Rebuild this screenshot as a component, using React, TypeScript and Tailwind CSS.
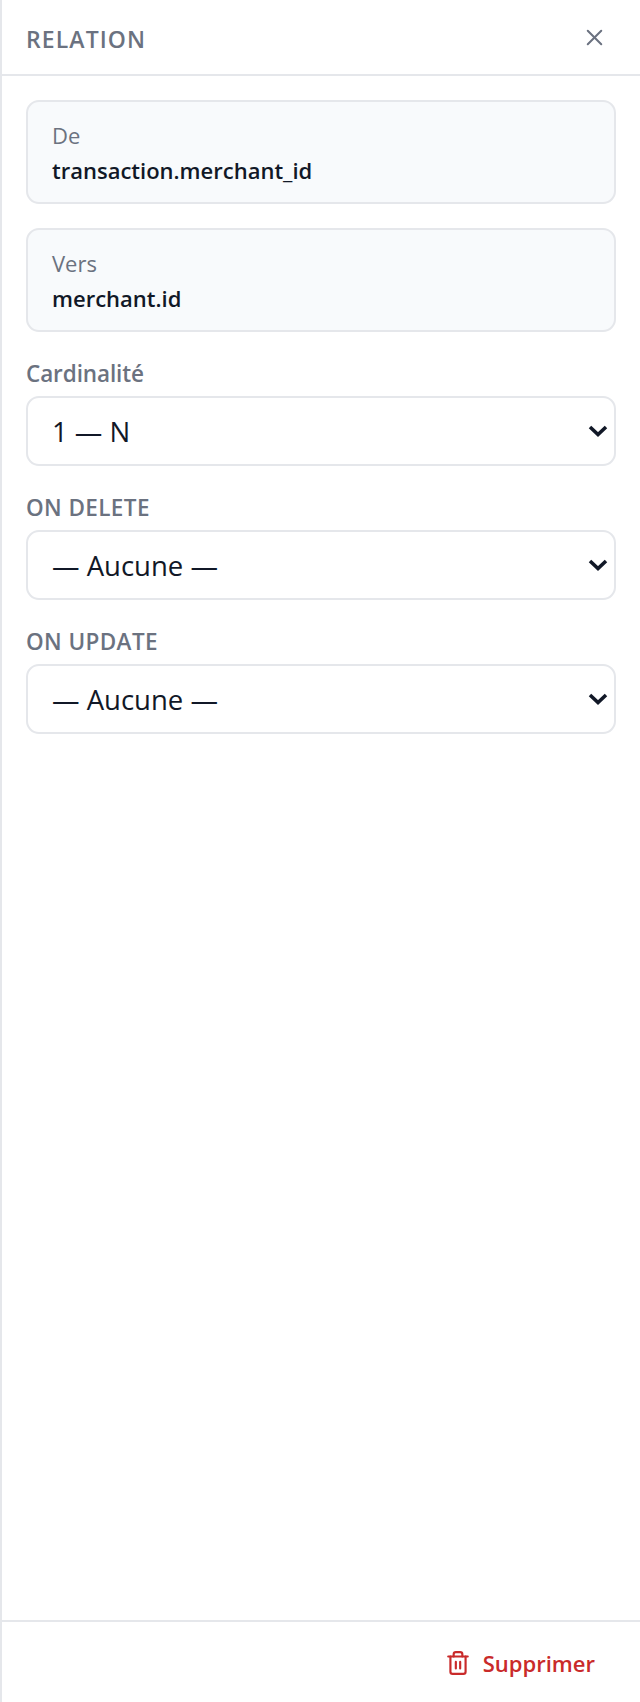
import React from "react";
import { Trash2, X } from "lucide-react";

function InfoCard(props: { label: string; value: string }): JSX.Element {
  return (
    <div className="h-[104px] rounded-[13px] border-2 border-[#e5e7eb] bg-[#f8fafc] px-6 pt-[17px]">
      <div className="text-[22px] leading-[33px] text-[#6b7280]">{props.label}</div>
      <div className="text-[22px] leading-[36px] font-semibold text-[#111827]">{props.value}</div>
    </div>
  );
}

function SelectField(props: { label: string; labelClass?: string; options: string[] }): JSX.Element {
  return (
    <div className="flex flex-col gap-[7px]">
      <label className={"text-[22.5px] leading-[30px] font-semibold text-[#6b7280] " + (props.labelClass ?? "")}>
        {props.label}
      </label>
      <div className="relative">
        <select className="h-[70px] w-full appearance-none rounded-[13px] border-2 border-[#e5e7eb] bg-white px-6 pt-0.5 text-[27.5px] text-[#111827]">
          {props.options.map((option) => (
            <option key={option}>{option}</option>
          ))}
        </select>
        <svg
          className="pointer-events-none absolute top-[29px] right-[8px] h-3 w-5"
          viewBox="0 0 20 12"
          fill="none"
          stroke="#111827"
          strokeWidth="3.6"
        >
          <polyline points="2,2 10,9.5 18,2" />
        </svg>
      </div>
    </div>
  );
}

export default function App(): JSX.Element {
  return (
    <div className="flex h-[1702px] w-full flex-col border-l-2 border-[#e5e7eb] bg-white font-['Open_Sans',sans-serif]">
      <div className="flex h-[76px] items-center justify-between border-b-2 border-[#e5e7eb] pr-[32px] pl-6">
        <span className="pt-1 text-[23px] font-semibold tracking-[1.1px] text-[#6b7280] uppercase">Relation</span>
        <button className="text-[#6b7280]">
          <X size={27} strokeWidth={1.8} />
        </button>
      </div>
      <div className="flex flex-1 flex-col gap-6 p-6">
        <InfoCard label="De" value="transaction.merchant_id" />
        <InfoCard label="Vers" value="merchant.id" />
        <div className="mt-[3px] flex flex-col gap-[27px]">
          <SelectField label="Cardinalité" labelClass="tracking-[-0.1px]" options={["1 — N", "1 — 1", "N — N"]} />
          <SelectField label="ON DELETE" labelClass="tracking-[0.4px]" options={["— Aucune —", "CASCADE", "SET NULL"]} />
          <SelectField label="ON UPDATE" labelClass="tracking-[0.4px]" options={["— Aucune —", "CASCADE", "SET NULL"]} />
        </div>
      </div>
      <div className="flex h-[82px] items-center justify-end border-t-2 border-[#e5e7eb] pt-0.5 pr-[45px]">
        <button className="flex items-center gap-3 text-[22px] font-semibold text-[#c92a2a]">
          <Trash2 size={26} strokeWidth={2} />
          Supprimer
        </button>
      </div>
    </div>
  );
}
